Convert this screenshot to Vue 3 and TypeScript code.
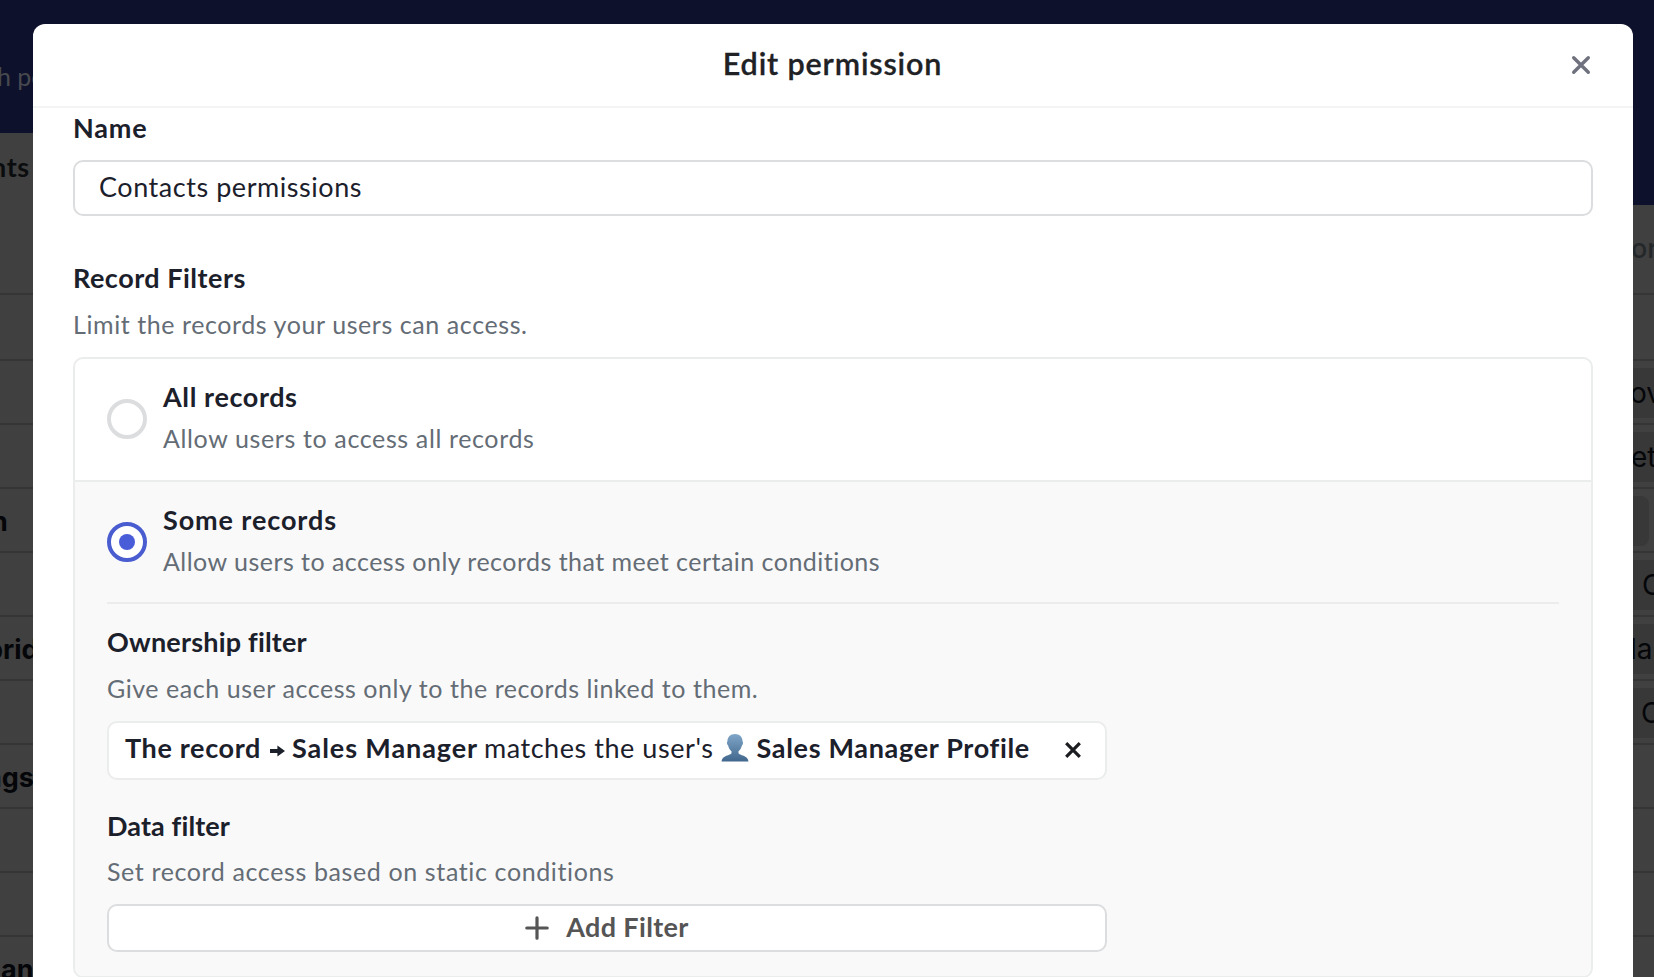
<script setup lang="ts">
import { ref } from 'vue'

interface BackdropRow {
  text: string
  offset: number
}
interface BackdropPill extends BackdropRow {
  pill: 'none' | 'full' | 'end'
}

const name = ref('Contacts permissions')
const scope = ref<'all' | 'some'>('some')

const leftRows: BackdropRow[] = [
  { text: '', offset: 0 },
  { text: '', offset: 0 },
  { text: '', offset: 0 },
  { text: 'n', offset: -9 },
  { text: '', offset: 0 },
  { text: 'brid', offset: -14 },
  { text: '', offset: 0 },
  { text: 'ngs', offset: -15 },
  { text: '', offset: 0 },
  { text: '', offset: 0 },
  { text: 'an', offset: 1 },
]

const rightRows: BackdropPill[] = [
  { text: '', offset: 0, pill: 'none' },
  { text: 'ove', offset: -3, pill: 'full' },
  { text: 'eti', offset: -2, pill: 'full' },
  { text: '', offset: 0, pill: 'end' },
  { text: 'C', offset: 9, pill: 'full' },
  { text: 'las', offset: -3, pill: 'full' },
  { text: 'C', offset: 8, pill: 'full' },
  { text: '', offset: 0, pill: 'none' },
  { text: '', offset: 0, pill: 'none' },
  { text: '', offset: 0, pill: 'none' },
  { text: '', offset: 0, pill: 'none' },
]
</script>

<template>
  <div class="screen">
    <aside class="strip strip-left">
      <div class="strip-hero"><span>h po</span></div>
      <div class="strip-tab"><span>nts</span></div>
      <div v-for="(row, i) in leftRows" :key="i" class="strip-row">
        <span class="strong" :style="{ marginLeft: row.offset + 'px' }">{{ row.text }}</span>
      </div>
    </aside>

    <main class="modal">
      <header class="modal-header">
        <span></span>
        <h1>Edit permission</h1>
        <button class="close" type="button" aria-label="Close">
          <svg width="20" height="20" viewBox="0 0 20 20">
            <path d="M2.700 2.700 17.300 17.300M17.300 2.700 2.700 17.300" />
          </svg>
        </button>
      </header>

      <div class="modal-body">
        <h2 class="name-label">Name</h2>
        <div class="input">{{ name }}</div>

        <h2 class="filters-label">Record Filters</h2>
        <p class="hint filters-hint">Limit the records your users can access.</p>

        <section class="options">
          <div class="option all" @click="scope = 'all'">
            <span class="radio" :class="{ checked: scope === 'all' }"></span>
            <div>
              <h2 class="all-title">All records</h2>
              <p class="hint all-hint">Allow users to access all records</p>
            </div>
          </div>

          <div class="panel">
            <div class="option some" @click="scope = 'some'">
              <span class="radio" :class="{ checked: scope === 'some' }"></span>
              <div>
                <h2 class="some-title">Some records</h2>
                <p class="hint some-hint">Allow users to access only records that meet certain conditions</p>
              </div>
            </div>

            <div class="details">
              <h2 class="ownership-title">Ownership filter</h2>
              <p class="hint ownership-hint">Give each user access only to the records linked to them.</p>
              <div class="rule">
                <b class="subject">The record</b>
                <svg class="arrow" width="15" height="12" viewBox="0 0 15 12">
                  <path d="M0 3.900H7.400V0.400L15 6 7.400 11.600V8.100H0Z" />
                </svg>
                <b class="field">Sales Manager</b>
                <span class="verb">matches the user's</span>
                <svg class="person" width="28" height="28" viewBox="0 0 28 28">
                  <defs>
                    <linearGradient id="bust" x1="0" y1="0" x2="0" y2="1">
                      <stop offset="0" stop-color="#7fa6c8" />
                      <stop offset="1" stop-color="#42678d" />
                    </linearGradient>
                  </defs>
                  <path
                    fill="url(#bust)"
                    d="M14 0C9.300 0 6.400 3 6.400 7.600C5.600 8 5.900 10.800 7.100 11.500C7.700 14.200 9 16 10.500 17.200V19.300C9.600 21.500 1 21.200 0.500 27.500H27.500C27 21.200 18.400 21.500 17.500 19.300V17.200C19 16 20.300 14.200 20.900 11.500C22.100 10.800 22.400 8 21.600 7.600C21.600 3 18.700 0 14 0Z"
                  />
                </svg>
                <b class="profile">Sales Manager Profile</b>
                <svg class="remove" width="18" height="18" viewBox="0 0 18 18">
                  <path d="M2.200 2.200 15.800 15.800M15.800 2.200 2.200 15.800" />
                </svg>
              </div>

              <h2 class="data-title">Data filter</h2>
              <p class="hint data-hint">Set record access based on static conditions</p>
              <button class="add" type="button">
                <svg width="24" height="24" viewBox="0 0 24 24">
                  <path d="M12 1.800V22.200M1.800 12H22.200" />
                </svg>
                <span>Add Filter</span>
              </button>
            </div>
          </div>
        </section>
      </div>
    </main>

    <aside class="strip strip-right">
      <div class="strip-hero"></div>
      <div class="strip-head"><span>or</span></div>
      <div v-for="(row, i) in rightRows" :key="i" class="strip-row">
        <div class="pill" :class="row.pill">
          <span :style="{ marginLeft: row.offset + 'px' }">{{ row.text }}</span>
        </div>
      </div>
    </aside>
  </div>
</template>

<style>
body {
  margin: 0;
  overflow: hidden;
}
</style>

<style scoped>
* {
  box-sizing: border-box;
}
.screen {
  display: grid;
  grid-template-columns: 33px 1600px 21px;
  width: 1654px;
  height: 977px;
  overflow: hidden;
  background: linear-gradient(#0d112b 100px, #404040 100px);
  color: #1b202b;
  font-family: Lato, 'Open Sans', sans-serif;
}
h1,
h2,
p {
  margin: 0;
  white-space: nowrap;
}
button {
  padding: 0;
  font: inherit;
  cursor: pointer;
}
svg {
  display: block;
  flex: none;
}

.strip {
  height: 977px;
  overflow: hidden;
  background: #404040;
  white-space: nowrap;
}
.strip-hero {
  background: #0d112b;
  color: #47494f;
}
.strip-left .strip-hero {
  height: 133px;
  padding-top: 61px;
  font-size: 25px;
  line-height: 30px;
}
.strip-left .strip-hero span {
  margin-left: -3px;
}
.strip-tab {
  height: 162px;
  padding-top: 18px;
  border-bottom: 2px solid #353535;
  color: #0b0c0e;
  font-size: 27px;
  font-weight: 700;
  line-height: 32px;
  letter-spacing: 0.6px;
}
.strip-tab span {
  margin-left: -9px;
}
.strip-right .strip-hero {
  height: 205px;
}
.strip-head {
  height: 90px;
  padding-top: 27px;
  border-bottom: 2px solid #353535;
  color: #24282a;
  font: 500 27px/34px Inter, sans-serif;
}
.strip-head span {
  margin-left: -2px;
}
.strip-row {
  height: 64px;
  border-bottom: 2px solid #353535;
  color: #050609;
  font: 400 28px/64px Inter, sans-serif;
}
.strip-row:nth-child(3) {
  height: 66px;
}
.strong {
  display: inline-block;
  font-size: 27px;
  font-weight: 700;
}
.pill {
  height: 50px;
  margin: 7px 0 0;
  line-height: 51px;
}
.pill span {
  display: inline-block;
}
.strip-right .strip-row {
  overflow: hidden;
}
.pill.full {
  background: #383838;
}
.pill.end {
  width: 16px;
  border-radius: 0 8px 8px 0;
  background: #383838;
}

.modal {
  display: flex;
  flex-direction: column;
  height: 1000px;
  margin-top: 24px;
  border-radius: 12px 12px 0 0;
  background: #fff;
}
.modal-header {
  display: grid;
  grid-template-columns: 1fr auto 1fr;
  align-items: center;
  flex: none;
  height: 84px;
  padding: 0 42px 4px;
  border-bottom: 2px solid #f3f4f6;
}
h1 {
  margin: 0 1px 1px 0;
  color: #202124;
  font-size: 30.5px;
  font-weight: 600;
  line-height: 36px;
  letter-spacing: 0.85px;
  -webkit-text-stroke: 0.3px currentColor;
}
.close {
  justify-self: end;
  margin-top: 4px;
  border: 0;
  background: none;
}
.close path {
  fill: none;
  stroke: #6f727e;
  stroke-width: 3.4;
  stroke-linecap: round;
}
.modal-body {
  padding: 4px 40px 0;
}
h2 {
  font-size: 27px;
  font-weight: 700;
  line-height: 32px;
  letter-spacing: 0.5px;
}
.hint {
  color: #646c75;
  font-size: 25px;
  line-height: 30px;
  letter-spacing: 0.58px;
}
.name-label {
  letter-spacing: 0.85px;
}
.input {
  height: 56px;
  margin-top: 16px;
  padding: 9px 24px;
  border: 2px solid #dcdddf;
  border-radius: 10px;
  font-size: 27px;
  line-height: 32px;
  letter-spacing: 0.55px;
}
.filters-label {
  margin-top: 46px;
}
.filters-hint {
  margin-top: 15px;
}

.options {
  height: 621px;
  margin-top: 18px;
  overflow: hidden;
  border: 2px solid #ebecec;
  border-radius: 10px;
}
.option {
  display: flex;
  align-items: flex-start;
  gap: 16px;
  height: 121px;
  padding: 22px 32px 0;
}
.option .hint {
  margin-top: 10px;
}
.radio {
  display: grid;
  place-items: center;
  flex: none;
  width: 40px;
  height: 40px;
  margin-top: 18px;
  border: 4px solid #dcdddf;
  border-radius: 50%;
  background: #fff;
}
.radio.checked {
  border-color: #4a5dd0;
}
.radio.checked::after {
  width: 16px;
  height: 16px;
  border-radius: 50%;
  background: #4a5dd8;
  content: '';
}
.all-title {
  letter-spacing: 0.6px;
}
.option .all-hint {
  letter-spacing: 0.63px;
}
.some-title {
  letter-spacing: 0.9px;
}
.option .some-hint {
  letter-spacing: 0.47px;
}
.panel {
  height: 500px;
  border-top: 2px solid #ebecec;
  background: #f9f9f9;
}
.option.some {
  height: 120px;
}
.details {
  margin: 0 32px;
  padding-top: 22px;
  border-top: 2px solid #ebecec;
}
.ownership-title {
  letter-spacing: 0.2px;
}
.ownership-hint {
  margin-top: 15px;
  letter-spacing: 0.55px;
}
.rule {
  display: flex;
  align-items: center;
  width: 1000px;
  height: 59px;
  margin-top: 18px;
  padding: 0 23px 5px 16px;
  border: 2px solid #ebecec;
  border-radius: 10px;
  background: #fff;
  font-size: 27px;
  line-height: 32px;
  white-space: nowrap;
}
.rule b {
  font-weight: 700;
}
.subject {
  letter-spacing: 0.65px;
}
.arrow {
  margin: 5px 7px 0 9px;
  fill: #1b202b;
}
.field {
  letter-spacing: 0.9px;
}
.verb {
  margin-left: 6px;
  letter-spacing: 0.55px;
}
.person {
  margin: 0 7px 1px 8px;
}
.profile {
  letter-spacing: 0.68px;
}
.remove {
  margin: 4px 0 0 auto;
}
.remove path {
  fill: none;
  stroke: #1c1d20;
  stroke-width: 3.2;
}
.data-title {
  margin-top: 30px;
  letter-spacing: 0.12px;
}
.data-hint {
  margin-top: 14px;
  letter-spacing: 0.62px;
}
.add {
  display: flex;
  align-items: center;
  justify-content: center;
  gap: 17px;
  width: 1000px;
  height: 48px;
  margin-top: 18px;
  border: 2px solid #dcdddf;
  border-radius: 10px;
  background: #fff;
  color: #555;
  font-size: 27px;
  font-weight: 700;
  line-height: 32px;
  letter-spacing: 0.35px;
}
.add span {
  margin-bottom: 2px;
}
.add path {
  fill: none;
  stroke: #555;
  stroke-width: 3.2;
  stroke-linecap: round;
}
</style>
